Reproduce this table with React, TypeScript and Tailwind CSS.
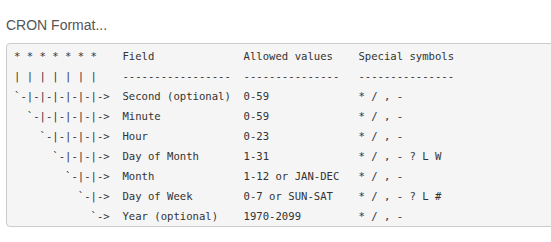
import React from 'react';

const cronLines = [
  '* * * * * * *    Field              Allowed values    Special symbols',
  '| | | | | | |    -----------------  ---------------   ---------------',
  '`-|-|-|-|-|-|->  Second (optional)  0-59              * / , -',
  '  `-|-|-|-|-|->  Minute             0-59              * / , -',
  '    `-|-|-|-|->  Hour               0-23              * / , -',
  '      `-|-|-|->  Day of Month       1-31              * / , - ? L W',
  '        `-|-|->  Month              1-12 or JAN-DEC   * / , -',
  '          `-|->  Day of Week        0-7 or SUN-SAT    * / , - ? L #',
  '            `->  Year (optional)    1970-2099         * / , -',
];

export default function App() {
  return (
    <div className="w-[551px] h-[242px] overflow-hidden bg-white pl-[6px] pt-[15px]">
      {/* title */}
      <p className="font-['Liberation_Sans',Arial,sans-serif] text-[14px] leading-[20px] text-[#555]">
        CRON Format...
      </p>

      {/* cron format table */}
      <pre className="mt-[8px] w-[560px] rounded-[4px] border border-[#ccc] bg-[#f5f5f5] pl-[7px] pt-[2px] font-['DejaVu_Sans_Mono',monospace] text-[10.6px] leading-[20px] text-[#333] whitespace-pre">
        {cronLines.join('\n')}
      </pre>
    </div>
  );
}
